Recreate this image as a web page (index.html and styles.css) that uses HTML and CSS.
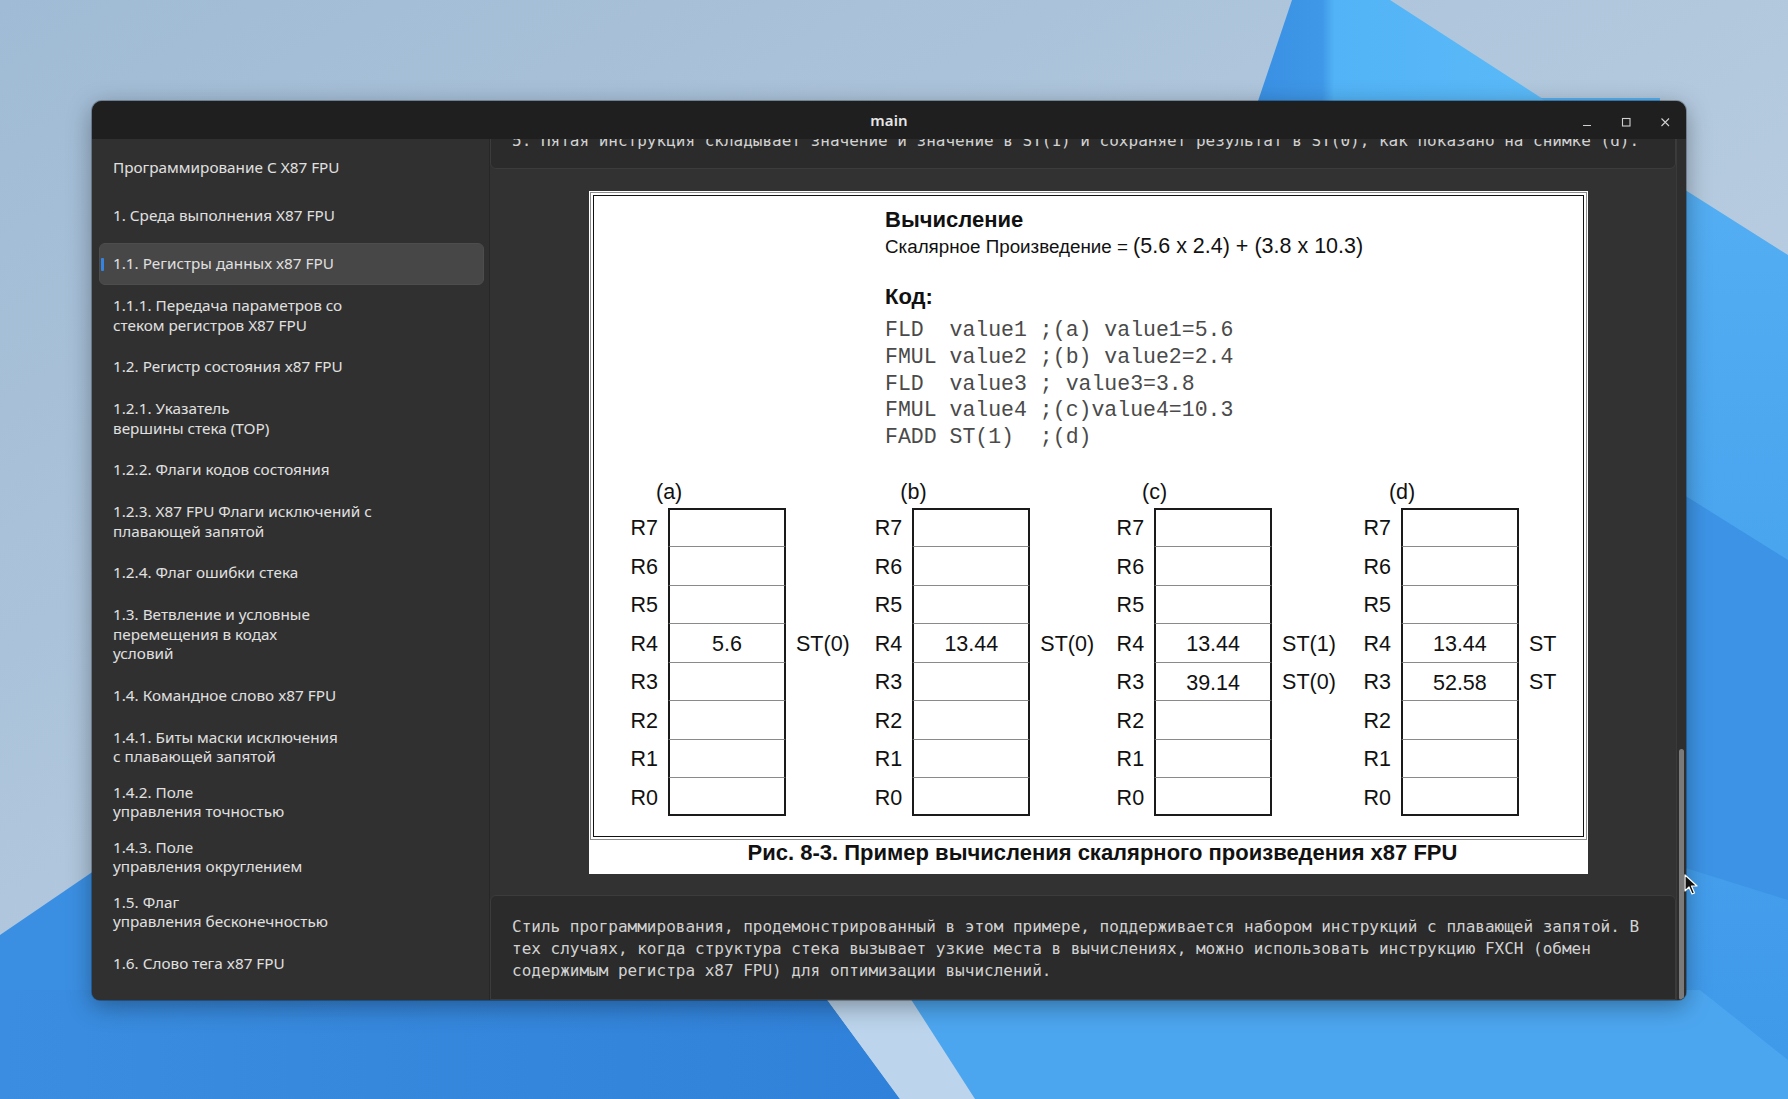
FILE: index.html
```html
<!DOCTYPE html>
<html lang="ru">
<head>
<meta charset="utf-8">
<title>main</title>
<link rel="stylesheet" href="styles.css">
</head>
<body>
<svg class="wallpaper" width="1788" height="1099" viewBox="0 0 1788 1099" xmlns="http://www.w3.org/2000/svg">
  <defs>
    <linearGradient id="sky" x1="0" y1="0" x2="1" y2="1">
      <stop offset="0" stop-color="#a0bbd5"/>
      <stop offset="0.6" stop-color="#b6cbdf"/>
      <stop offset="1" stop-color="#c3d4e4"/>
    </linearGradient>
    <linearGradient id="shard" x1="0" y1="0" x2="1" y2="0">
      <stop offset="0" stop-color="#3a90e3"/>
      <stop offset="0.22" stop-color="#3f98e8"/>
      <stop offset="0.26" stop-color="#52b3f6"/>
      <stop offset="1" stop-color="#5bbaf8"/>
    </linearGradient>
    <linearGradient id="right" x1="0" y1="0" x2="0" y2="1">
      <stop offset="0" stop-color="#56b0f3"/>
      <stop offset="0.45" stop-color="#4aa5ef"/>
      <stop offset="1" stop-color="#3f99ea"/>
    </linearGradient>
    <linearGradient id="botl" x1="0" y1="0" x2="1" y2="0">
      <stop offset="0" stop-color="#3a8de0"/>
      <stop offset="1" stop-color="#3081d9"/>
    </linearGradient>
  </defs>
  <rect width="1788" height="1099" fill="url(#sky)"/>
  <polygon points="1292,0 1390,0 1560,110 1255,110" fill="url(#shard)"/>
  <polygon points="1540,98 1788,255 1788,1099 1660,1099 1660,98" fill="url(#right)"/>
  <polygon points="1660,480 1788,560 1788,900 1660,860" fill="#3d94e6"/>
  <polygon points="0,935 110,860 110,1099 0,1099" fill="#3b8fe2"/>
  <polygon points="0,990 820,990 900,1099 0,1099" fill="url(#botl)"/>
  <polygon points="820,990 905,990 975,1099 900,1099" fill="#bcd5ec"/>
  <polygon points="905,990 1700,990 1788,1060 1788,1099 975,1099" fill="#4ca6ef"/>
</svg>

<div class="window">
  <header class="titlebar">
    <span></span>
    <span class="title">main</span>
    <div class="controls">
      <svg width="10" height="10" viewBox="0 0 10 10"><path d="M1 8.5h8" stroke="#d0d0d0" stroke-width="1.2"/></svg>
      <svg width="10" height="10" viewBox="0 0 10 10"><rect x="1.5" y="1.5" width="7.5" height="7.5" fill="none" stroke="#d0d0d0" stroke-width="1.1"/></svg>
      <svg width="10" height="10" viewBox="0 0 10 10"><path d="M1.5 1.5l7.5 7.5M9 1.5l-7.5 7.5" stroke="#d0d0d0" stroke-width="1.1"/></svg>
    </div>
  </header>
  <div class="main">
    <nav class="sidebar">
      <div class="item">Программирование С X87 FPU</div>
      <div class="item">1. Среда выполнения X87 FPU</div>
      <div class="item selected">1.1. Регистры данных x87 FPU</div>
      <div class="item">1.1.1. Передача параметров со<br>стеком регистров X87 FPU</div>
      <div class="item">1.2. Регистр состояния x87 FPU</div>
      <div class="item">1.2.1. Указатель<br>вершины стека (TOP)</div>
      <div class="item">1.2.2. Флаги кодов состояния</div>
      <div class="item">1.2.3. X87 FPU Флаги исключений с<br>плавающей запятой</div>
      <div class="item">1.2.4. Флаг ошибки стека</div>
      <div class="item">1.3. Ветвление и условные<br>перемещения в кодах<br>условий</div>
      <div class="item">1.4. Командное слово x87 FPU</div>
      <div class="item">1.4.1. Биты маски исключения<br>с плавающей запятой</div>
      <div class="item">1.4.2. Поле<br>управления точностью</div>
      <div class="item">1.4.3. Поле<br>управления округлением</div>
      <div class="item">1.5. Флаг<br>управления бесконечностью</div>
      <div class="item">1.6. Слово тега x87 FPU</div>
      <div class="item">1.7. x87 FPU Указатели инструкций</div>
    </nav>
    <section class="content">
      <div class="column">
        <div class="card card-top">5. Пятая инструкция складывает значение и значение в ST(1) и сохраняет результат в ST(0), как показано на снимке (d).</div>
        <div class="figure-area">
          <div class="figure">
            <div class="frame-outer">
              <div class="frame">
                <div class="calc">
                  <div class="calc-title">Вычисление</div>
                  <div class="calc-formula"><span class="f-label">Скалярное Произведение = </span><span class="f-expr">(5.6 x 2.4) + (3.8 x 10.3)</span></div>
                  <div class="calc-title code-title">Код:</div>
<pre class="code">FLD  value1 ;(a) value1=5.6
FMUL value2 ;(b) value2=2.4
FLD  value3 ; value3=3.8
FMUL value4 ;(c)value4=10.3
FADD ST(1)  ;(d)</pre>
                </div>
                <div class="stacks">
                  <div class="stack">
                    <div class="stack-label">(a)</div>
                    <div class="row"><span class="rl">R7</span><span class="cell"></span><span class="st"></span></div>
                    <div class="row"><span class="rl">R6</span><span class="cell"></span><span class="st"></span></div>
                    <div class="row"><span class="rl">R5</span><span class="cell"></span><span class="st"></span></div>
                    <div class="row"><span class="rl">R4</span><span class="cell">5.6</span><span class="st">ST(0)</span></div>
                    <div class="row"><span class="rl">R3</span><span class="cell"></span><span class="st"></span></div>
                    <div class="row"><span class="rl">R2</span><span class="cell"></span><span class="st"></span></div>
                    <div class="row"><span class="rl">R1</span><span class="cell"></span><span class="st"></span></div>
                    <div class="row"><span class="rl">R0</span><span class="cell"></span><span class="st"></span></div>
                  </div>
                  <div class="stack">
                    <div class="stack-label">(b)</div>
                    <div class="row"><span class="rl">R7</span><span class="cell"></span><span class="st"></span></div>
                    <div class="row"><span class="rl">R6</span><span class="cell"></span><span class="st"></span></div>
                    <div class="row"><span class="rl">R5</span><span class="cell"></span><span class="st"></span></div>
                    <div class="row"><span class="rl">R4</span><span class="cell">13.44</span><span class="st">ST(0)</span></div>
                    <div class="row"><span class="rl">R3</span><span class="cell"></span><span class="st"></span></div>
                    <div class="row"><span class="rl">R2</span><span class="cell"></span><span class="st"></span></div>
                    <div class="row"><span class="rl">R1</span><span class="cell"></span><span class="st"></span></div>
                    <div class="row"><span class="rl">R0</span><span class="cell"></span><span class="st"></span></div>
                  </div>
                  <div class="stack">
                    <div class="stack-label">(c)</div>
                    <div class="row"><span class="rl">R7</span><span class="cell"></span><span class="st"></span></div>
                    <div class="row"><span class="rl">R6</span><span class="cell"></span><span class="st"></span></div>
                    <div class="row"><span class="rl">R5</span><span class="cell"></span><span class="st"></span></div>
                    <div class="row"><span class="rl">R4</span><span class="cell">13.44</span><span class="st">ST(1)</span></div>
                    <div class="row"><span class="rl">R3</span><span class="cell">39.14</span><span class="st">ST(0)</span></div>
                    <div class="row"><span class="rl">R2</span><span class="cell"></span><span class="st"></span></div>
                    <div class="row"><span class="rl">R1</span><span class="cell"></span><span class="st"></span></div>
                    <div class="row"><span class="rl">R0</span><span class="cell"></span><span class="st"></span></div>
                  </div>
                  <div class="stack stack-clip">
                    <div class="stack-label">(d)</div>
                    <div class="row"><span class="rl">R7</span><span class="cell"></span><span class="st"></span></div>
                    <div class="row"><span class="rl">R6</span><span class="cell"></span><span class="st"></span></div>
                    <div class="row"><span class="rl">R5</span><span class="cell"></span><span class="st"></span></div>
                    <div class="row"><span class="rl">R4</span><span class="cell">13.44</span><span class="st">ST(1)</span></div>
                    <div class="row"><span class="rl">R3</span><span class="cell">52.58</span><span class="st">ST(0)</span></div>
                    <div class="row"><span class="rl">R2</span><span class="cell"></span><span class="st"></span></div>
                    <div class="row"><span class="rl">R1</span><span class="cell"></span><span class="st"></span></div>
                    <div class="row"><span class="rl">R0</span><span class="cell"></span><span class="st"></span></div>
                  </div>
                </div>
              </div>
            </div>
            <div class="caption">Рис. 8-3. Пример вычисления скалярного произведения x87 FPU</div>
          </div>
        </div>
        <div class="card card-bottom">Стиль программирования, продемонстрированный в этом примере, поддерживается набором инструкций с плавающей запятой. В тех случаях, когда структура стека вызывает узкие места в вычислениях, можно использовать инструкцию FXCH (обмен содержимым регистра x87 FPU) для оптимизации вычислений.</div>
      </div>
      <div class="scrollbar"><div class="thumb"></div></div>
    </section>
  </div>
</div>

<svg class="cursor" width="14" height="22" viewBox="0 0 14 22"><path d="M1 1v16l4-4 3 7 2.5-1-3-7h5.5z" fill="#111" stroke="#fff" stroke-width="1.2" stroke-linejoin="round"/></svg>
</body>
</html>
```

FILE: styles.css
```css
* { box-sizing: border-box; }

html, body {
  margin: 0;
  padding: 0;
}

body {
  width: 1788px;
  height: 1099px;
  position: relative;
  overflow: hidden;
  font-family: "Noto Sans", "Liberation Sans", sans-serif;
  background: #b0c7dc;
}

.wallpaper {
  position: absolute;
  left: 0;
  top: 0;
}

.window {
  position: absolute;
  left: 92px;
  top: 101px;
  width: 1594px;
  height: 899px;
  border-radius: 10px 10px 8px 8px;
  overflow: hidden;
  display: flex;
  flex-direction: column;
  background: #303030;
  box-shadow: 0 6px 24px rgba(0, 0, 0, 0.35), 0 0 0 1px rgba(0, 0, 0, 0.25);
}

.titlebar {
  height: 38px;
  flex: none;
  background: #1f1f1f;
  display: grid;
  grid-template-columns: 1fr auto 1fr;
  align-items: center;
  color: #e6e6e6;
  position: relative;
  z-index: 2;
}

.title {
  font-size: 15px;
  font-weight: 600;
  letter-spacing: 0.1px;
}

.controls {
  justify-self: end;
  display: flex;
  gap: 29px;
  padding-right: 16px;
  padding-top: 3px;
}

.controls svg { display: block; }

.main {
  flex: 1;
  display: flex;
  min-height: 0;
}

.sidebar {
  width: 398px;
  flex: none;
  background: #303030;
  padding: 8px 5px 0 7px;
  display: flex;
  flex-direction: column;
  gap: 6px;
  overflow: hidden;
  border-right: 1px solid #272727;
}

.item {
  min-height: 42px;
  padding: 4px 13px;
  display: flex;
  align-items: center;
  font-size: 15.3px;
  line-height: 19.5px;
  color: #e0e0e0;
  border-radius: 6px;
  border: 1px solid transparent;
  flex: none;
  position: relative;
}

.item.selected {
  background: #474747;
  border-color: #4d4d4d;
}

.item.selected::before {
  content: "";
  position: absolute;
  left: 1px;
  top: 14px;
  width: 3px;
  height: 13px;
  background: #3584e4;
  border-radius: 1px;
}

.content {
  flex: 1;
  display: flex;
  min-width: 0;
  background: #323232;
}

.column {
  flex: 1;
  display: flex;
  flex-direction: column;
  overflow: hidden;
  min-width: 0;
}

.card {
  background: #2b2b2b;
  border: 1px solid #3c3c3c;
  font-family: "DejaVu Sans Mono", "Liberation Mono", monospace;
  font-size: 16px;
  line-height: 22px;
  color: #d2d2d2;
  padding: 20px 20px 16px 21px;
  flex: none;
}

.card-top {
  margin-top: -30px;
  border-radius: 0 0 6px 6px;
}

.card-bottom {
  border-radius: 6px 6px 0 0;
  padding-top: 20px;
  flex: 1;
}

.figure-area {
  flex: none;
  padding: 22px 0 21px 99px;
  display: flex;
}

.figure {
  width: 999px;
  background: #ffffff;
  padding: 1px 1px 8px;
}

.frame-outer {
  border: 1px solid #8d8d8d;
  padding: 2px;
}

.frame {
  border: 1px solid #111;
  padding: 11px 0 20px;
  color: #111;
  font-family: "Liberation Sans", Arial, sans-serif;
}

.calc {
  padding-left: 291px;
}

.calc-title {
  font-size: 22px;
  font-weight: 700;
  line-height: 25px;
}

.code-title {
  margin-top: 22px;
}

.calc-formula {
  line-height: 28px;
}

.f-label { font-size: 18.8px; }
.f-expr { font-size: 21.5px; }

.code {
  margin: 8px 0 0;
  font-family: "Liberation Mono", "Courier New", monospace;
  font-size: 21.5px;
  line-height: 26.75px;
  color: #4a4a4a;
}

.stacks {
  display: flex;
  gap: 22.3px;
  padding-left: 34px;
  margin-top: 29.5px;
}

.stack:nth-child(3) { margin-left: -2.5px; }
.stack:nth-child(4) { margin-left: 2.5px; }

.stack {
  display: flex;
  flex-direction: column;
  font-size: 21.5px;
}

.stack-label {
  line-height: 24px;
  padding-left: 28px;
  margin-bottom: 3.5px;
}

.row {
  display: flex;
  height: 38.5px;
  align-items: stretch;
}

.rl {
  width: 30px;
  flex: none;
  text-align: right;
  align-self: center;
  padding-top: 3px;
  white-space: nowrap;
}

.cell {
  width: 118px;
  flex: none;
  margin-left: 10px;
  border-left: 2px solid #1a1a1a;
  border-right: 2px solid #1a1a1a;
  border-top: 1px solid #8a8a8a;
  display: flex;
  align-items: center;
  justify-content: center;
  padding-top: 3px;
}

.row:nth-child(2) .cell { border-top: 2px solid #1a1a1a; }
.row:last-child .cell { border-bottom: 2px solid #1a1a1a; }

.st {
  width: 54px;
  flex: none;
  margin-left: 10px;
  align-self: center;
  white-space: nowrap;
  padding-top: 3px;
}

.stack-clip .st {
  width: 28.5px;
  overflow: hidden;
}

.caption {
  font-family: "Liberation Sans", Arial, sans-serif;
  font-weight: 700;
  font-size: 22px;
  line-height: 26px;
  text-align: center;
  color: #111;
  padding-left: 28px;
}

.scrollbar {
  width: 10px;
  flex: none;
  background: #2e2e2e;
  border-left: 1px solid #3a3a3a;
  display: flex;
  flex-direction: column;
  align-items: center;
}

.thumb {
  width: 5px;
  margin-top: 610px;
  flex: 1;
  background: #7a7a7a;
  border-radius: 3px;
}

.cursor {
  position: absolute;
  left: 1684px;
  top: 874px;
}
```
